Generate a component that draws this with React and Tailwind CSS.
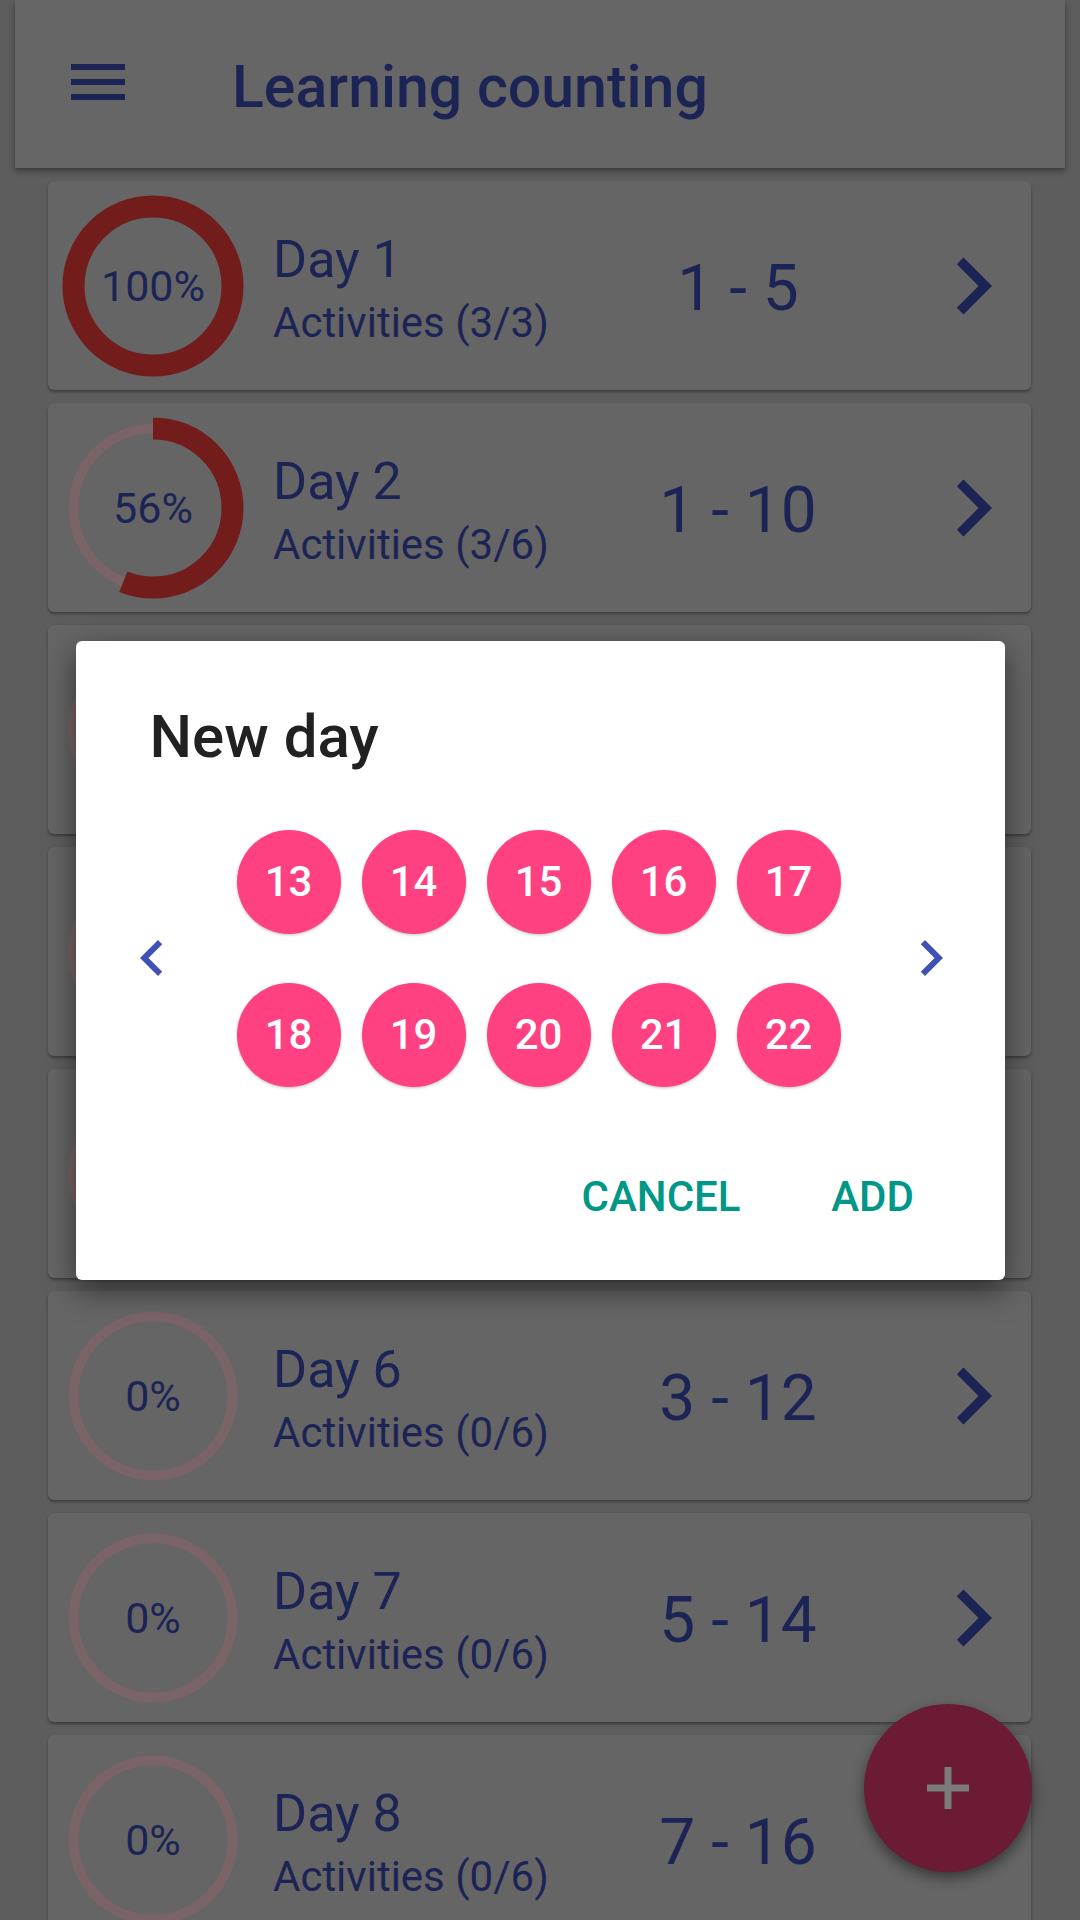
import React from "react";

const DAYS = [
  { day: 1, done: 3, total: 3, pct: 100, range: "1 - 5" },
  { day: 2, done: 3, total: 6, pct: 56, range: "1 - 10" },
  { day: 3, done: 0, total: 6, pct: 0, range: "1 - 10" },
  { day: 4, done: 0, total: 6, pct: 0, range: "1 - 10" },
  { day: 5, done: 0, total: 6, pct: 0, range: "1 - 10" },
  { day: 6, done: 0, total: 6, pct: 0, range: "3 - 12" },
  { day: 7, done: 0, total: 6, pct: 0, range: "5 - 14" },
  { day: 8, done: 0, total: 6, pct: 0, range: "7 - 16" },
];

const NUMBERS = [13, 14, 15, 16, 17, 18, 19, 20, 21, 22];

const R = 79.5;
const CIRC = 2 * Math.PI * R;

function Ring({ pct }) {
  return (
    <div className="grid place-items-center w-[184px] h-[184px]">
      <svg width="184" height="184" viewBox="0 0 184 184" className="col-start-1 row-start-1">
        {pct < 100 && <circle cx="92" cy="92" r={R} fill="none" stroke="#7a6467" strokeWidth="10" />}
        {pct > 0 && (
          <circle
            cx="92"
            cy="92"
            r={R}
            fill="none"
            stroke="#721c1c"
            strokeWidth="22"
            strokeDasharray={`${(CIRC * pct) / 100} ${CIRC}`}
            transform="rotate(-90 92 92)"
          />
        )}
      </svg>
      <span className="col-start-1 row-start-1 text-[43px] leading-none text-[#1c2456] mt-[2px]">{pct}%</span>
    </div>
  );
}

function ChevronRight({ size, color }) {
  return (
    <svg width={size} height={size} viewBox="0 0 24 24" className="shrink-0">
      <path d="M10 6L8.59 7.41 13.17 12l-4.58 4.59L10 18l6-6z" fill={color} />
    </svg>
  );
}

function ChevronLeft({ size, color }) {
  return (
    <svg width={size} height={size} viewBox="0 0 24 24" className="shrink-0">
      <path d="M15.41 7.41L14 6l-6 6 6 6 1.41-1.41L10.83 12z" fill={color} />
    </svg>
  );
}

function DayCard({ d }) {
  return (
    <div className="flex items-center h-[209px] shrink-0 rounded-[6px] bg-[#656565] shadow-[0_2px_3px_rgba(0,0,0,0.35)]">
      <div className="pl-[13px]">
        <Ring pct={d.pct} />
      </div>
      <div className="self-start pt-[48px] ml-[28px] w-[335px] text-[#1c2456]">
        <div className="text-[52px] leading-[62px]">Day {d.day}</div>
        <div className="mt-[7px] text-[42px] leading-[50px]">
          Activities ({d.done}/{d.total})
        </div>
      </div>
      <div className="w-[260px] mt-[6px] text-center text-[64px] leading-none text-[#1c2456]">{d.range}</div>
      <div className="ml-[48px]">
        <ChevronRight size={114} color="#1c2456" />
      </div>
    </div>
  );
}

export default function App() {
  return (
    <div
      className="relative w-[1080px] h-[1920px] overflow-hidden bg-[#5d5d5d]"
      style={{ fontFamily: "Roboto, 'Noto Sans', sans-serif" }}
    >
      <header className="relative z-10 mx-[15px] h-[168px] flex items-center bg-[#666666] shadow-[0_3px_6px_rgba(0,0,0,0.4)]">
        <svg width="72" height="72" viewBox="0 0 24 24" className="ml-[47px] mb-[4px] shrink-0">
          <path d="M3 18h18v-2H3v2zm0-5h18v-2H3v2zm0-7v2h18V6H3z" fill="#1c2456" />
        </svg>
        <h1 className="ml-[98px] mt-[4px] text-[59px] leading-none font-medium text-[#1c2456]">Learning counting</h1>
      </header>

      <main className="flex flex-col gap-[13px] pt-[13px] pl-[48px] pr-[49px]">
        {DAYS.map((d) => (
          <DayCard key={d.day} d={d} />
        ))}
      </main>

      <button className="absolute left-[864px] top-[1704px] w-[168px] h-[168px] rounded-full bg-[#6b1b34] shadow-[0_6px_14px_rgba(0,0,0,0.45)] flex items-center justify-center">
        <svg width="42" height="42" viewBox="0 0 42 42">
          <path d="M21 0v42M0 21h42" stroke="#7b7b7b" strokeWidth="7" />
        </svg>
      </button>

      <div className="absolute inset-0 z-20 flex items-center justify-center">
        <div className="w-[929px] rounded-[6px] bg-white shadow-[0_10px_30px_rgba(0,0,0,0.5)]">
          <h2 className="pl-[74px] pt-[61px] text-[60px] leading-[70px] font-medium text-[#212121]">New day</h2>

          <div className="mt-[58px] flex items-center">
            <div className="ml-[40px]">
              <ChevronLeft size={72} color="#3f51b5" />
            </div>
            <div className="flex-1 flex justify-center pr-[5px]">
              <div className="grid grid-cols-5 gap-x-[21px] gap-y-[49px]">
                {NUMBERS.map((n) => (
                  <div
                    key={n}
                    className="w-[104px] h-[104px] rounded-full bg-[#ff4081] flex items-center justify-center text-[42px] leading-none font-medium text-white shadow-[0_1px_3px_rgba(0,0,0,0.25)]"
                  >
                    {n}
                  </div>
                ))}
              </div>
            </div>
            <div className="mr-[38px]">
              <ChevronRight size={72} color="#3f51b5" />
            </div>
          </div>

          <div className="mt-[56px] pb-[29px] pr-[36px] flex justify-end gap-[12px]">
            <button className="h-[108px] min-w-[192px] px-[24px] text-[42px] leading-none font-medium text-[#009688]">
              CANCEL
            </button>
            <button className="h-[108px] min-w-[192px] px-[24px] text-[42px] leading-none font-medium text-[#009688]">
              ADD
            </button>
          </div>
        </div>
      </div>
    </div>
  );
}
